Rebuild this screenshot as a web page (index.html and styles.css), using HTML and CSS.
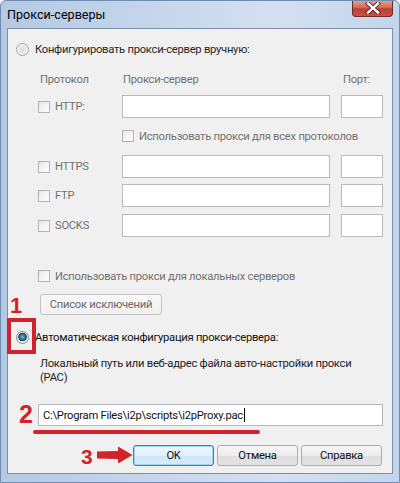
FILE: index.html
```html
<!DOCTYPE html>
<html lang="ru">
<head>
<meta charset="utf-8">
<link rel="stylesheet" href="styles.css">
</head>
<body>
<div class="window">
  <div class="titlebar">
    <span class="title">Прокси-серверы</span>
    <div class="close">
      <svg width="16" height="12" viewBox="0 0 16 12"><path d="M3 1.5 L13 10.5 M13 1.5 L3 10.5" stroke="#5a1f1f" stroke-width="4.2" stroke-linecap="square"/><path d="M3 1.5 L13 10.5 M13 1.5 L3 10.5" stroke="#fff" stroke-width="2.4" stroke-linecap="square"/></svg>
    </div>
  </div>
  <div class="client">
    <div class="radio-row r1"><span class="radio"></span><span class="lbl">Конфигурировать прокси-сервер вручную:</span></div>
    <div class="manual">
      <div class="row head">
        <span class="proto h">Протокол</span><span class="server h">Прокси-сервер</span><span class="port h">Порт:</span>
      </div>
      <div class="row field r-http">
        <span class="proto"><span class="check"></span>HTTP:</span><span class="server box"></span><span class="port box"></span>
      </div>
      <div class="row r-all">
        <span class="proto"></span><span class="chk-lbl"><span class="check"></span>Использовать прокси для всех протоколов</span>
      </div>
      <div class="row field r-https">
        <span class="proto"><span class="check"></span>HTTPS</span><span class="server box"></span><span class="port box"></span>
      </div>
      <div class="row field r-ftp">
        <span class="proto"><span class="check"></span>FTP</span><span class="server box"></span><span class="port box"></span>
      </div>
      <div class="row field r-socks">
        <span class="proto"><span class="check"></span>SOCKS</span><span class="server box"></span><span class="port box"></span>
      </div>
      <div class="row r-local">
        <span class="chk-lbl"><span class="check"></span>Использовать прокси для локальных серверов</span>
      </div>
      <div class="btn exc">Список исключений</div>
    </div>
    <div class="radio-row r2"><span class="radio on"></span><span class="lbl dark">Автоматическая конфигурация прокси-сервера:</span></div>
    <p class="pac-desc">Локальный путь или веб-адрес файла авто-настройки прокси<br>(PAC)</p>
    <div class="pac-input"><span class="val">C:\Program Files\i2p\scripts\i2pProxy.pac</span><span class="caret"></span></div>
    <div class="buttons">
      <div class="btn main ok">OK</div>
      <div class="btn main">Отмена</div>
      <div class="btn main">Справка</div>
    </div>
  </div>

  <span class="ann n1">1</span>
  <span class="ann-box"></span>
  <span class="ann n2">2</span>
  <span class="ann-line"></span>
  <span class="ann n3">3</span>
  <svg class="ann-arrow" width="36" height="18" viewBox="0 0 36 18"><path d="M0 5.5 L21 5 L21 0.5 L35.5 9 L21 17.5 L21 13 L0 12.5 Z" fill="#d2232a"/></svg>
</div>
</body>
</html>
```

FILE: styles.css
```css
html, body {
  margin: 0;
  padding: 0;
  background: #fff;
}

body {
  font-family: Roboto, "Noto Sans", sans-serif;
  font-size: 11.2px;
  letter-spacing: -0.25px;
  color: #1b1b1b;
}

.window {
  position: relative;
  width: 400px;
  height: 483px;
  box-sizing: border-box;
  padding: 0 6px 8px 6px;
  display: flex;
  flex-direction: column;
  background: linear-gradient(90deg, #b4c9e4 0%, #c6d7ec 40%, #d3e0f1 70%, #c3d5ec 100%);
  border: 1px solid #6f8bb0;
  border-radius: 6px 6px 0 0;
  overflow: hidden;
}

.titlebar {
  height: 27px;
  flex: none;
  display: flex;
  align-items: flex-start;
  justify-content: space-between;
}

.title {
  margin-top: 6px;
  margin-left: 0;
  font-size: 12.6px;
  letter-spacing: 0;
  color: #000;
}

.close {
  width: 41px;
  height: 17px;
  margin-right: 0;
  margin-top: -1px;
  box-sizing: border-box;
  border: 1px solid #6e2b2b;
  border-top: none;
  border-radius: 0 0 4px 4px;
  background: linear-gradient(180deg, #e8a493 0%, #d2705f 45%, #be3f33 55%, #c65342 100%);
  display: flex;
  align-items: center;
  justify-content: center;
}

.close svg {
  display: block;
}

.client {
  flex: 1;
  background: #f0f0f0;
  border: 1px solid #7d8fa8;
  display: flex;
  flex-direction: column;
  padding: 0 9px 0 0;
}

/* radio rows */
.radio-row {
  display: flex;
  align-items: center;
  height: 16px;
  gap: 6px;
  padding-left: 8px;
}

.r1 { margin-top: 12px; }
.r2 { margin-top: 14px; }

.radio {
  width: 13px;
  height: 13px;
  box-sizing: border-box;
  border-radius: 50%;
  border: 1px solid #a5a5a5;
  background: radial-gradient(circle at 50% 50%, #d9d9d9 0%, #ececec 55%, #f7f7f7 100%);
  flex: none;
}

.radio.on {
  border-color: #7a8fa3;
  background: radial-gradient(circle at 50% 45%, #6ab9d3 0%, #2a6f8c 35%, #163e52 48%, #e6ecf0 56%, #f2f4f6 100%);
}

.lbl {
  color: #262626;
}

.lbl.dark {
  color: #111;
}

/* manual proxy section */
.manual {
  padding-left: 30px;
  display: flex;
  flex-direction: column;
  color: #717171;
}

.row {
  display: flex;
  align-items: center;
}

.head { margin-top: 14px; height: 16px; }
.r-http { margin-top: 8px; }
.r-all { margin-top: 10px; height: 16px; }
.r-https { margin-top: 11px; }
.r-ftp { margin-top: 6px; }
.r-socks { margin-top: 7px; }
.r-local { margin-top: 31px; height: 16px; }

.field { height: 23px; }

.proto {
  width: 84px;
  flex: none;
  display: flex;
  align-items: center;
  gap: 5px;
}

.server {
  width: 208px;
  flex: none;
}

.port {
  width: 42px;
  flex: none;
  margin-left: 11px;
}

.h.proto { padding-left: 2px; box-sizing: border-box; }
.h.server { padding-left: 1px; box-sizing: border-box; }
.h.port { padding-left: 2px; box-sizing: border-box; }

.box {
  height: 23px;
  box-sizing: border-box;
  border: 1px solid #b9b9b9;
  background: #fff;
}

.check {
  width: 12px;
  height: 12px;
  box-sizing: border-box;
  border: 1px solid #b4b4b4;
  background: linear-gradient(135deg, #e6e6e6 0%, #f7f7f7 60%, #fbfbfb 100%);
  flex: none;
}

.chk-lbl {
  display: flex;
  align-items: center;
  gap: 5px;
  white-space: nowrap;
}

.btn {
  box-sizing: border-box;
  border: 1px solid #adadad;
  border-radius: 3px;
  background: linear-gradient(180deg, #f6f6f6 0%, #ececec 50%, #dedede 51%, #e2e2e2 100%);
  display: flex;
  align-items: center;
  justify-content: center;
}

.exc {
  align-self: flex-start;
  margin-top: 10px;
  margin-left: 2px;
  width: 122px;
  height: 21px;
  color: #6a6a6a;
  background: linear-gradient(180deg, #f8f8f8 0%, #f0f0f0 100%);
  border-color: #c2c2c2;
}

/* PAC */
.pac-desc {
  margin: 12px 0 0 32px;
  line-height: 14px;
  color: #222;
  white-space: nowrap;
}

.pac-input {
  margin: 19px 0 0 30px;
  height: 22px;
  box-sizing: border-box;
  border: 1px solid #b2b6bc;
  background: #fff;
  display: flex;
  align-items: center;
  padding-left: 4px;
  color: #111;
}

.caret {
  width: 1px;
  height: 14px;
  background: #000;
  margin-left: 1px;
}

.buttons {
  margin-top: 19px;
  display: flex;
  justify-content: flex-end;
  gap: 3px;
  padding-right: 1px;
}

.btn.main {
  width: 81px;
  height: 21px;
  color: #111;
}

.btn.ok {
  border-color: #3c7fb1;
  box-shadow: inset 0 0 0 1px #9fd5f3;
  background: linear-gradient(180deg, #eef7fd 0%, #e0f0fb 50%, #cfe7f8 51%, #d7ecfa 100%);
}

/* annotations (overlays) */
.ann {
  position: absolute;
  font-family: "Liberation Sans", sans-serif;
  font-weight: bold;
  letter-spacing: 0;
  color: #d2232a;
  line-height: 1;
}

.n1 { left: 9px; top: 294px; font-size: 22px; }
.n2 { left: 18px; top: 401px; font-size: 25px; }
.n3 { left: 80px; top: 445px; font-size: 21px; }

.ann-box {
  position: absolute;
  left: 6px;
  top: 317px;
  width: 29px;
  height: 36px;
  box-sizing: border-box;
  border: 4px solid #d2232a;
}

.ann-line {
  position: absolute;
  left: 32px;
  top: 429px;
  width: 227px;
  height: 4px;
  border-radius: 2px;
  background: #d2232a;
}

.ann-arrow {
  position: absolute;
  left: 96px;
  top: 445px;
}
```
